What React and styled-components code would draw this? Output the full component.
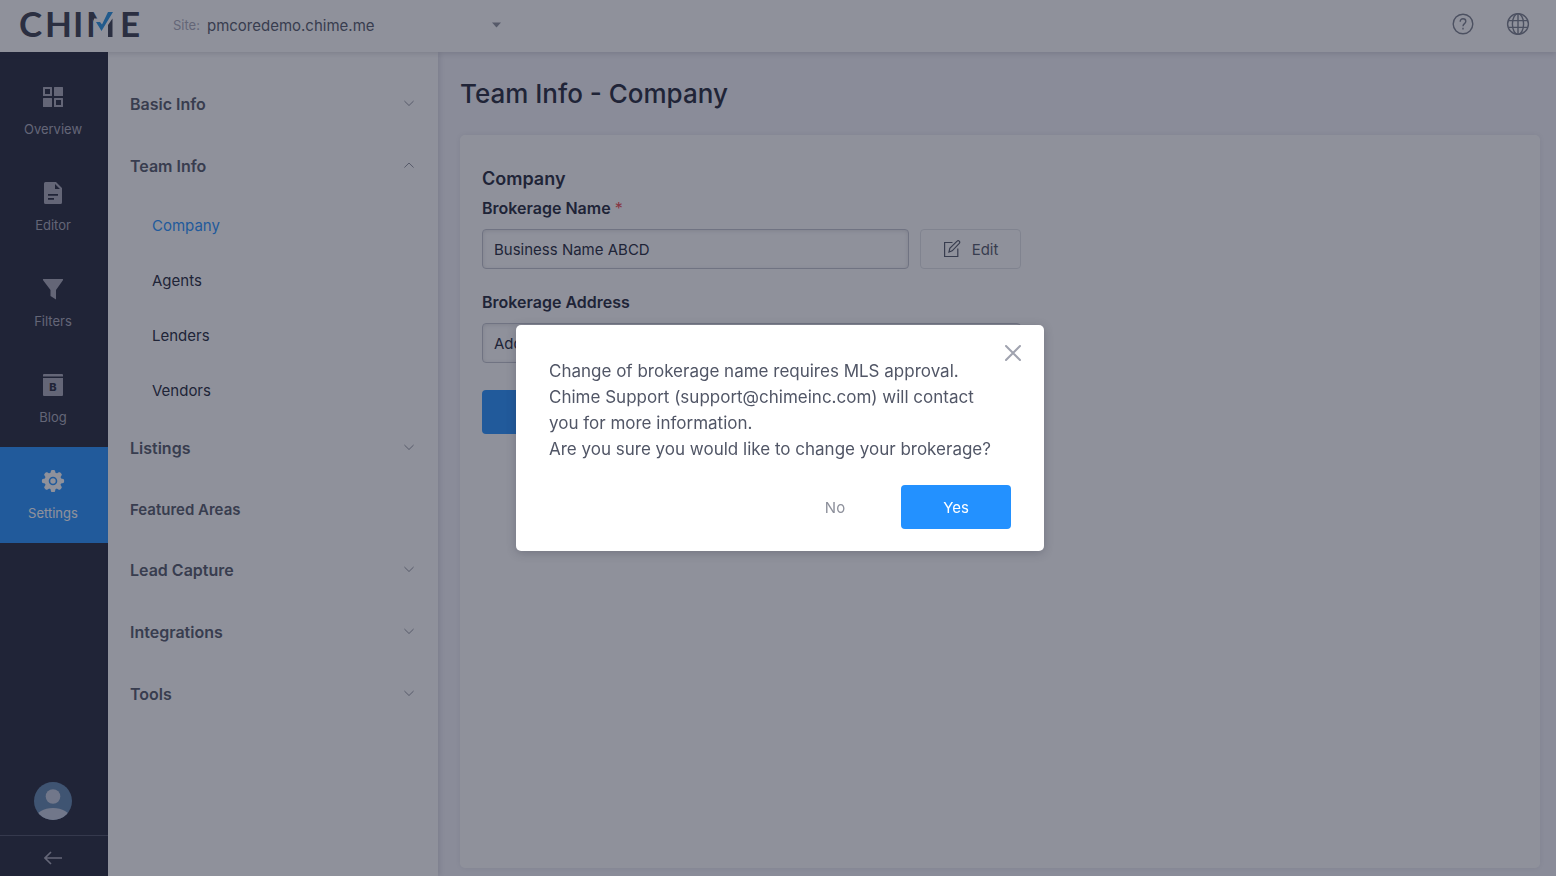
import React, { useState } from 'react'
import styled, { createGlobalStyle } from 'styled-components'

const GlobalStyle = createGlobalStyle`
  * {
    box-sizing: border-box;
  }
  body {
    margin: 0;
    font-family: Inter, "Liberation Sans", sans-serif;
    font-size: 15px;
    color: #202437;
    background: #f4f4fa;
  }
  button, input, select {
    font: inherit;
    color: inherit;
  }
`

const Page = styled.div`
  min-height: 100vh;
  display: flex;
  flex-direction: column;
`

const Header = styled.header`
  height: 52px;
  padding: 0 26px 0 18px;
  display: flex;
  align-items: center;
  background: #fff;
  box-shadow: 0 2px 5px rgba(32, 36, 55, 0.15);
  z-index: 2;
`

const SitePicker = styled.label`
  display: flex;
  align-items: center;
  gap: 7px;
  margin-left: 29px;
  margin-right: auto;
  padding-bottom: 2px;
  font-size: 13px;
  color: #a8a8b7;
`

const SelectBox = styled.div`
  display: grid;
  align-items: center;
  width: 294px;
  select, svg {
    grid-area: 1 / 1;
  }
  select {
    appearance: none;
    border: 0;
    padding: 0;
    background: none;
    font-size: 15px;
    color: #515666;
  }
  svg {
    justify-self: end;
    pointer-events: none;
  }
`

const HeaderButtons = styled.div`
  display: flex;
  align-items: center;
  gap: 32px;
  padding-bottom: 4px;
`

const IconButton = styled.button`
  display: flex;
  padding: 0;
  border: 0;
  background: none;
  color: #797e8b;
  cursor: pointer;
`

const Body = styled.div`
  flex: 1;
  display: flex;
`

const SideBar = styled.nav`
  width: 108px;
  flex: none;
  display: flex;
  flex-direction: column;
  padding-top: 11px;
  background: #202437;
`

const SideLink = styled.a`
  height: 96px;
  padding: 22px 2px 0 0;
  display: flex;
  flex-direction: column;
  align-items: center;
  gap: 12px;
  font-size: 13px;
  line-height: 16px;
  text-decoration: none;
  color: ${props => props.$active ? '#fff' : '#a8a8b7'};
  background: ${props => props.$active ? '#2391ff' : 'transparent'};
`

const Avatar = styled.button`
  margin: auto 0 15px;
  padding: 0 2px 0 0;
  border: 0;
  background: none;
  display: flex;
  justify-content: center;
`

const Collapse = styled.button`
  height: 41px;
  padding: 4px 2px 0 0;
  border: 0;
  border-top: 1px solid #4a4e62;
  background: none;
  display: flex;
  align-items: center;
  justify-content: center;
  color: #a8a8b7;
`

const Menu = styled.nav`
  width: 330px;
  flex: none;
  padding-top: 21px;
  background: #fff;
  box-shadow: 2px 0 5px rgba(32, 36, 55, 0.12);
  z-index: 1;
`

const MenuGroup = styled.button`
  width: 100%;
  height: ${props => props.$plain ? '60px' : '62px'};
  padding: 0 24px 0 22px;
  display: flex;
  align-items: center;
  justify-content: space-between;
  border: 0;
  background: none;
  font-size: ${props => props.$plain ? '15px' : '16px'};
  font-weight: 600;
  color: #515666;
  cursor: pointer;
`

const SubLink = styled.a`
  height: 55px;
  padding: 2px 0 0 44px;
  display: flex;
  align-items: center;
  text-decoration: none;
  color: ${props => props.$active ? '#2391ff' : '#202437'};
`

const Main = styled.main`
  flex: 1;
  padding: 22px 16px 8px 22px;
  display: flex;
  flex-direction: column;
`

const Title = styled.h1`
  margin: 0 0 21px;
  font-size: 26px;
  line-height: 40px;
  font-weight: 500;
`

const Card = styled.section`
  flex: 1;
  padding: 32px 22px;
  border-radius: 5px;
  background: #fff;
  box-shadow: 0 0 5px rgba(32, 36, 55, 0.08);
`

const CardTitle = styled.h2`
  margin: 0 0 7px;
  font-size: 18px;
  line-height: 24px;
  font-weight: 600;
`

const Form = styled.form`
  max-width: 539px;
`

const Field = styled.div`
  margin-bottom: ${props => props.$last ? '27px' : '23px'};
  label {
    display: block;
    margin-bottom: 11px;
    font-size: 16px;
    line-height: 20px;
    font-weight: 600;
  }
  label span {
    font-weight: 400;
    color: #f0454c;
  }
`

const FieldRow = styled.div`
  display: flex;
  gap: 11px;
`

const TextInput = styled.input`
  flex: 1;
  min-width: 0;
  height: 40px;
  padding: 0 11px;
  border: 1px solid #c0c2cd;
  border-radius: 4px;
  background: #fff;
  box-shadow: inset 0 1px 4px rgba(32, 36, 55, 0.15);
  outline: 0;
`

const EditButton = styled.button`
  width: 101px;
  height: 40px;
  display: flex;
  align-items: center;
  justify-content: center;
  gap: 11px;
  border: 1px solid #e1e2e6;
  border-radius: 4px;
  background: #fff;
  color: #515666;
`

const Button = styled.button`
  width: 110px;
  height: 44px;
  border: 0;
  border-radius: 4px;
  background: ${props => props.$primary ? '#2391ff' : 'transparent'};
  color: ${props => props.$primary ? '#fff' : '#8d909b'};
  cursor: pointer;
`

const Overlay = styled.div`
  position: fixed;
  inset: 0;
  z-index: 10;
  padding-left: 4px;
  display: flex;
  align-items: center;
  justify-content: center;
  background: rgba(32, 36, 55, 0.5);
`

const Dialog = styled.div`
  position: relative;
  width: 528px;
  padding: 33px 33px 22px;
  border-radius: 5px;
  background: #fff;
  box-shadow: 0 2px 10px rgba(32, 36, 55, 0.25);
  p {
    max-width: 454px;
    margin: 0;
    font-size: 17px;
    line-height: 26px;
    color: #515666;
  }
`

const CloseButton = styled(IconButton)`
  position: absolute;
  top: 20px;
  right: 23px;
  color: #a0a3af;
`

const DialogButtons = styled.div`
  margin-top: 23px;
  display: flex;
  justify-content: flex-end;
  gap: 11px;
`

const Logo = () => (
  <svg width="126" height="52" viewBox="0 0 126 52" role="img" aria-label="Chime">
    <text y="37" x="1 27 55 68 102" fontFamily="Lato, sans-serif" fontWeight="700" fontSize="35" fill="#363b4b">CHIME</text>
    <path d="M76 18.5h4.5V10H100v28H76z" fill="#fff" />
    <path d="M90 25l4.5-6.5V37H90z" fill="#363b4b" />
    <path d="M78 22h4l2 2.5L90 12h5L83.5 31z" fill="#2391e0" />
  </svg>
)

const HelpIcon = () => (
  <svg width="22" height="22" viewBox="0 0 22 22" fill="none" stroke="currentColor" strokeWidth="1.4">
    <circle cx="11" cy="11" r="9.8" />
    <path d="M8.2 8.7c0-1.8 1.2-2.9 2.8-2.9s2.8 1.1 2.8 2.6c0 2.2-2.8 2.3-2.8 4.9" />
    <path d="M11 14.8v1.6" />
  </svg>
)

const GlobeIcon = () => (
  <svg width="24" height="24" viewBox="0 0 24 24" fill="none" stroke="currentColor" strokeWidth="1.4">
    <circle cx="12" cy="12" r="10.4" />
    <ellipse cx="12" cy="12" rx="5.6" ry="10.4" />
    <path d="M12 1.6v20.8M2.4 8.6h19.2M2.4 15.4h19.2" />
  </svg>
)

const OverviewIcon = () => (
  <svg width="24" height="24" viewBox="0 0 24 24" fill="currentColor">
    <path fillRule="evenodd" d="M2.5 2h8a.5.5 0 01.5.5v8a.5.5 0 01-.5.5h-8a.5.5 0 01-.5-.5v-8a.5.5 0 01.5-.5zM4 4v5h5V4zM13.5 2h8a.5.5 0 01.5.5v8a.5.5 0 01-.5.5h-8a.5.5 0 01-.5-.5v-8a.5.5 0 01.5-.5zM2.5 13h8a.5.5 0 01.5.5v8a.5.5 0 01-.5.5h-8a.5.5 0 01-.5-.5v-8a.5.5 0 01.5-.5zM13.5 13h8a.5.5 0 01.5.5v8a.5.5 0 01-.5.5h-8a.5.5 0 01-.5-.5v-8a.5.5 0 01.5-.5zM15 15v5h5v-5z" />
  </svg>
)

const EditorIcon = () => (
  <svg width="24" height="24" viewBox="0 0 24 24">
    <path d="M4.5 1H15l6 6v14.5a1.5 1.5 0 01-1.5 1.5h-15A1.5 1.5 0 013 21.5v-19A1.5 1.5 0 014.5 1z" fill="currentColor" />
    <path d="M14 3v5h5zM7 13h10v1.8H7zM7 17h6v1.8H7z" fill="#202437" />
  </svg>
)

const FilterIcon = () => (
  <svg width="24" height="24" viewBox="0 0 24 24" fill="currentColor">
    <path d="M2.7 2h18.6c.8 0 1 .7.6 1.3L15 13v9.6L9.5 19v-6L2.1 3.3C1.7 2.7 1.9 2 2.7 2z" />
  </svg>
)

const BlogIcon = () => (
  <svg width="24" height="24" viewBox="0 0 24 24">
    <path d="M3 1h18a1 1 0 011 1v1.5H2V2a1 1 0 011-1zM2 5h20v17a1 1 0 01-1 1H3a1 1 0 01-1-1z" fill="currentColor" />
    <text x="12" y="18" textAnchor="middle" fontSize="11" fontWeight="800" fill="#202437">B</text>
  </svg>
)

const teeth = [0, 45, 90, 135, 180, 225, 270, 315]

const SettingsIcon = () => (
  <svg width="24" height="24" viewBox="0 0 24 24" fill="currentColor">
    {teeth.map(angle => (
      <path key={angle} d="M9.2 5l.8-3.2a1.2 1.2 0 011.2-.9h1.6a1.2 1.2 0 011.2.9l.8 3.2z" transform={`rotate(${angle} 12 12)`} />
    ))}
    <circle cx="12" cy="12" r="8.4" />
    <circle cx="12" cy="12" r="3.5" fill="none" stroke="#2391ff" strokeWidth="1.6" />
  </svg>
)

const AvatarIcon = () => (
  <svg width="38" height="38" viewBox="0 0 38 38">
    <clipPath id="face"><circle cx="19" cy="19" r="19" /></clipPath>
    <g clipPath="url(#face)">
      <rect width="38" height="38" fill="#5f84ac" />
      <circle cx="19" cy="14.5" r="7.3" fill="#c3cbdc" />
      <ellipse cx="19" cy="36" rx="17" ry="10" fill="#c3cbdc" />
    </g>
  </svg>
)

const Chevron = ({ up }) => (
  <svg width="10" height="10" viewBox="0 0 10 10" fill="none" stroke="#8d909b">
    <path d={up ? 'M.4 6.5L5 2l4.6 4.5' : 'M.4 2L5 6.5 9.6 2'} />
  </svg>
)

const PencilIcon = () => (
  <svg width="18" height="18" viewBox="0 0 18 18" fill="none" stroke="currentColor" strokeWidth="1.2">
    <path d="M9.5 2.5H1.6v14h13.2V8.5" />
    <path d="M6 12l.8-3.6 7.3-7.2a1.5 1.5 0 012.2 0 1.5 1.5 0 010 2.2L9.2 10.8z" />
  </svg>
)

const sideLinks = [
  { name: 'Overview', Icon: OverviewIcon },
  { name: 'Editor', Icon: EditorIcon },
  { name: 'Filters', Icon: FilterIcon },
  { name: 'Blog', Icon: BlogIcon },
  { name: 'Settings', Icon: SettingsIcon, active: true },
]

const menuGroups = [
  { name: 'Basic Info' },
  { name: 'Team Info', links: ['Company', 'Agents', 'Lenders', 'Vendors'] },
  { name: 'Listings' },
  { name: 'Featured Areas', plain: true },
  { name: 'Lead Capture' },
  { name: 'Integrations' },
  { name: 'Tools' },
]

function ConfirmDialog(props) {
  const { onClose } = props

  return (
    <Overlay>
      <Dialog role="dialog" aria-modal="true">
        <CloseButton aria-label="Close" onClick={onClose}>
          <svg width="16" height="16" viewBox="0 0 16 16" stroke="currentColor" strokeWidth="2" strokeLinecap="round">
            <path d="M1 1l14 14M15 1L1 15" />
          </svg>
        </CloseButton>
        <p>
          Change of brokerage name requires MLS approval. Chime Support (support@chimeinc.com) will contact you for more information.
        </p>
        <p>Are you sure you would like to change your brokerage?</p>
        <DialogButtons>
          <Button onClick={onClose}>No</Button>
          <Button $primary onClick={onClose}>Yes</Button>
        </DialogButtons>
      </Dialog>
    </Overlay>
  )
}

function App() {
  const [showDialog, setShowDialog] = useState(true)
  const [name, setName] = useState('Business Name ABCD')
  const [address, setAddress] = useState('Address')

  return (
    <Page>
      <GlobalStyle />
      <Header>
        <Logo />
        <SitePicker>
          Site:
          <SelectBox>
            <select>
              <option>pmcoredemo.chime.me</option>
            </select>
            <svg width="9" height="6" viewBox="0 0 9 6" fill="#8d909b"><path d="M0 .5h9L4.5 5.5z" /></svg>
          </SelectBox>
        </SitePicker>
        <HeaderButtons>
          <IconButton aria-label="Help"><HelpIcon /></IconButton>
          <IconButton aria-label="Language"><GlobeIcon /></IconButton>
        </HeaderButtons>
      </Header>

      <Body>
        <SideBar>
          {sideLinks.map(({ name, Icon, active }) => (
            <SideLink key={name} href="#" $active={active}>
              <Icon />
              {name}
            </SideLink>
          ))}
          <Avatar aria-label="Account"><AvatarIcon /></Avatar>
          <Collapse aria-label="Collapse">
            <svg width="18" height="14" viewBox="0 0 18 14" fill="none" stroke="currentColor" strokeWidth="1.6">
              <path d="M7 1L1 7l6 6M1 7h17" />
            </svg>
          </Collapse>
        </SideBar>

        <Menu>
          {menuGroups.map(group => (
            <React.Fragment key={group.name}>
              <MenuGroup $plain={group.plain}>
                {group.name}
                {!group.plain && <Chevron up={!!group.links} />}
              </MenuGroup>
              {group.links && group.links.map(link => (
                <SubLink key={link} href="#" $active={link === 'Company'}>{link}</SubLink>
              ))}
            </React.Fragment>
          ))}
        </Menu>

        <Main>
          <Title>Team Info - Company</Title>
          <Card>
            <CardTitle>Company</CardTitle>
            <Form onSubmit={e => e.preventDefault()}>
              <Field>
                <label htmlFor="brokerage-name">Brokerage Name <span>*</span></label>
                <FieldRow>
                  <TextInput id="brokerage-name" value={name} onChange={e => setName(e.target.value)} />
                  <EditButton type="button" onClick={() => setShowDialog(true)}>
                    <PencilIcon />
                    Edit
                  </EditButton>
                </FieldRow>
              </Field>
              <Field $last>
                <label htmlFor="brokerage-address">Brokerage Address</label>
                <FieldRow>
                  <TextInput id="brokerage-address" value={address} onChange={e => setAddress(e.target.value)} />
                </FieldRow>
              </Field>
              <Button $primary>Save</Button>
            </Form>
          </Card>
        </Main>
      </Body>

      {showDialog && <ConfirmDialog onClose={() => setShowDialog(false)} />}
    </Page>
  )
}

export default App
